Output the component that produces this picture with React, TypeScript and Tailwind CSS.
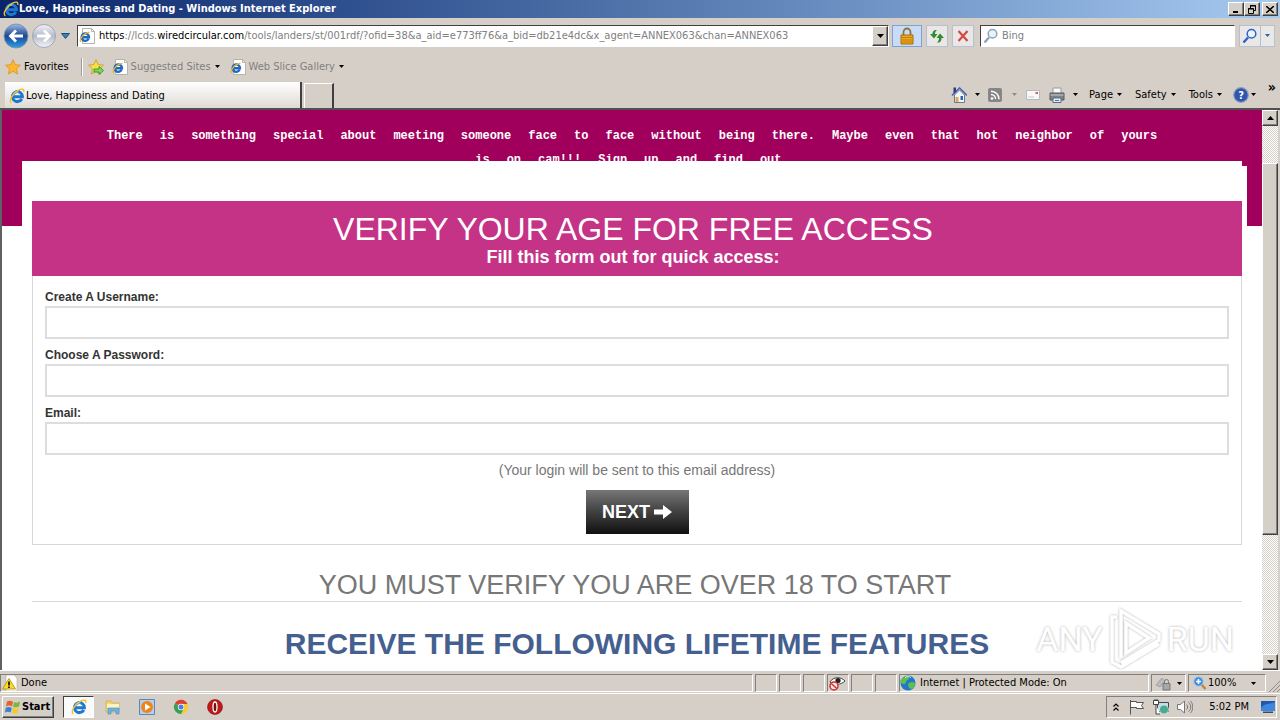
import { ReactNode } from "react";
import clsx from "clsx";

const heroWords =
  "There is something special about meeting someone face to face without being there. Maybe even that hot neighbor of yours is on cam!!! Sign up and find out.".split(" ")

const fields = [
  { id: "username", label: "Create A Username:", type: "text" },
  { id: "password", label: "Choose A Password:", type: "password" },
  { id: "email", label: "Email:", type: "email" },
]

const raised =
  "bg-[#d4d0c8] border border-t-white border-l-white border-r-[#404040] border-b-[#404040] shadow-[inset_-1px_-1px_0_#808080]"
const sunken = "border border-t-[#808080] border-l-[#808080] border-r-white border-b-white"
const field = "border border-t-[#404040] border-l-[#404040] border-r-white border-b-white bg-white"

const Arrow = ({ className = "" }: { className?: string }) => (
  <svg viewBox="0 0 5 3" className={clsx("w-[5px] h-[3px] shrink-0", className)}>
    <path d="M0 0h5L2.5 3z" fill="currentColor" />
  </svg>
)

const IELogo = () => (
  <svg viewBox="0 0 16 16" className="size-4 shrink-0" fill="none">
    <path d="M12.8 11A5 5 0 1 1 13.4 8.8H4.5" stroke="#1f78d0" strokeWidth="3" />
    <path d="M4.1 7.2A4.6 4.6 0 0 1 9.4 4" stroke="#7fd0fa" strokeWidth="1.4" />
    <path d="M2.4 14.8C-1 13 4 5 9.500 2.200 13 .5 15.700.8 14.600 4" stroke="#f2c02c" strokeWidth="1.4" />
  </svg>
)

const PageLogo = () => (
  <svg viewBox="0 0 16 16" className="size-4 shrink-0" fill="none">
    <path d="M3.500.5h9l3 3v12h-12z" fill="#fff" stroke="#b4b4ac" />
    <path d="M12.500.5v3h3" stroke="#b4b4ac" />
    <path d="M9.6 10.8A3.7 3.7 0 1 1 10 9.200H3.500" stroke="#1f68c0" strokeWidth="2.4" />
    <path d="M2 14C-.5 12 4 5.5 10.500 4.200" stroke="#e9b62c" strokeWidth="1.2" />
  </svg>
)

const Star = ({ add }: { add?: boolean }) => (
  <svg viewBox="0 0 16 16" className="size-4 shrink-0">
    <path
      d="M8 .8l2.200 4.900 5.200.5-3.900 3.600 1.100 5.200L8 12.300 3.400 15l1.100-5.200L.6 6.200l5.200-.5z"
      fill={add ? "#f8e04c" : "#fdb62d"}
      stroke={add ? "#c79a10" : "#e09018"}
      strokeWidth=".8"
    />
    {add && <path d="M6 10h5V7.500l4.500 4-4.500 4V13H6z" fill="#7ed957" stroke="#2c8a1c" strokeWidth=".8" />}
  </svg>
)

const Magnifier = ({ color }: { color: string }) => (
  <svg viewBox="0 0 16 16" className="size-4 shrink-0" fill="none">
    <path d="M1.5 14.5L6 9.5" stroke={color} strokeWidth="2.4" />
    <circle cx="9.5" cy="5.8" r="4.3" fill="#e8f3fb" stroke={color} strokeWidth="1.5" />
  </svg>
)

const TitleBar = () => (
  <div className="flex h-[18px] items-center bg-linear-to-r from-[#0a246a] to-[#a6caf0] pl-[3px] pr-0.5 text-white">
    <IELogo />
    <h1 className="flex-1 font-bold">Love, Happiness and Dating - Windows Internet Explorer</h1>
    <div className="flex">
      <button aria-label="Minimize" className={clsx(raised, "h-3.5 w-4 flex items-center justify-center")}>
        <svg viewBox="0 0 10 8" className="w-2.5 h-2"><path d="M2 6h5v2H2z" /></svg>
      </button>
      <button aria-label="Restore" className={clsx(raised, "h-3.5 w-4 flex items-center justify-center")}>
        <svg viewBox="0 0 10 9" className="w-2.5 h-[9px]" fill="none" stroke="#000">
          <path d="M3.5 3V.5h5v5H7M3 1h6M1.5 3.5h5v5h-5zM1 4h6" />
        </svg>
      </button>
      <button aria-label="Close" className={clsx(raised, "ml-0.5 h-3.5 w-4 flex items-center justify-center")}>
        <svg viewBox="0 0 8 7" className="w-2 h-[7px]"><path d="M0 0l8 7M8 0L0 7" stroke="#000" strokeWidth="1.6" /></svg>
      </button>
    </div>
  </div>
)

const ToolButton = ({ label, className, children }: { label: string; className?: string; children: ReactNode }) => (
  <button aria-label={label} className={clsx("h-[22px] flex items-center justify-center border", className)}>
    {children}
  </button>
)

const plain = "border-[#b4c0d4] bg-[#e9e8e6]"

const AddressRow = () => (
  <div className="flex h-[35px] items-center pl-[3px] pr-[5px]">
    <button aria-label="Back">
      <svg viewBox="0 0 26 26" className="size-[26px]">
        <defs>
          <linearGradient id="back" x2="0" y2="1">
            <stop offset="0" stopColor="#9dbbe4" />
            <stop offset=".5" stopColor="#1c4590" />
            <stop offset="1" stopColor="#2ba0ec" />
          </linearGradient>
        </defs>
        <circle cx="13" cy="13" r="12" fill="url(#back)" stroke="#8494b0" />
        <path d="M20 13H8M13 7.5L7.5 13l5.5 5.5" stroke="#fff" strokeWidth="2.8" fill="none" />
      </svg>
    </button>
    <button aria-label="Forward" className="ml-0.5">
      <svg viewBox="0 0 26 26" className="size-[26px]">
        <defs>
          <linearGradient id="fwd" x2="0" y2="1">
            <stop offset="0" stopColor="#f4f4f8" />
            <stop offset=".5" stopColor="#b4bac9" />
            <stop offset="1" stopColor="#f4f6fa" />
          </linearGradient>
        </defs>
        <circle cx="13" cy="13" r="11.5" fill="url(#fwd)" stroke="#9ea6b6" />
        <path d="M6 13h12M13 7.5l5.500 5.500-5.500 5.500" stroke="#fff" strokeWidth="2.8" fill="none" />
      </svg>
    </button>
    <button aria-label="Recent pages" className="ml-1">
      <svg viewBox="0 0 9 6" className="w-[9px] h-1.5"><path d="M.5.5h8l-4 5z" fill="#3f7fb8" stroke="#1d4f80" /></svg>
    </button>
    <div className={clsx(field, "ml-[7px] flex h-[22px] flex-1 items-center gap-1 overflow-hidden pl-px")}>
      <PageLogo />
      <div role="textbox" aria-label="Address" className="flex-1 whitespace-nowrap text-[#808080]">
        <span className="text-black">https</span>://lcds.<span className="text-black">wiredcircular.com</span>
        /tools/landers/st/001rdf/?ofid=38&amp;a_aid=e773ff76&amp;a_bid=db21e4dc&amp;x_agent=ANNEX063&amp;chan=ANNEX063
      </div>
      <button aria-label="Show address history" className={clsx(raised, "h-5 w-4 flex items-center justify-center")}>
        <svg viewBox="0 0 7 4" className="w-[7px] h-1"><path d="M0 0h7L3.5 4z" /></svg>
      </button>
    </div>
    <ToolButton label="Security report" className="ml-[3px] w-[30px] border-[#7da2d8] bg-[#c8dcf8]">
      <svg viewBox="0 0 16 18" className="w-4 h-[18px]">
        <path d="M4.5 8V5a3.500 3.500 0 0 1 7 0v3" fill="none" stroke="#8a7440" strokeWidth="1.8" />
        <path d="M2 8h12v9H2z" fill="#f0a91e" stroke="#a86c08" />
        <path d="M2.5 10.5h11M2.5 13h11M2.5 15h11" stroke="#c47f0c" />
      </svg>
    </ToolButton>
    <ToolButton label="Refresh" className={clsx(plain, "ml-1 w-[22px]")}>
      <svg viewBox="0 0 16 16" className="size-4" fill="#2e8b2e">
        <path d="M8 2C4.500 1.500 3.500 4 3.500 6H1l4 4.500L8.500 6H6c0-1.500.3-2.500 2-4z" />
        <path d="M8 14.500c3.500.5 4.500-2 4.500-4.500H15l-4-4.500L7.500 10H10c0 1.800-.3 3-2 4.500z" />
      </svg>
    </ToolButton>
    <ToolButton label="Stop" className={clsx(plain, "ml-1 w-[22px]")}>
      <svg viewBox="0 0 12 12" className="size-3"><path d="M1.5 1l9 10M10.5 1l-9 10" stroke="#d34a48" strokeWidth="2.2" /></svg>
    </ToolButton>
    <div className={clsx(field, "ml-1.5 flex h-[22px] w-[255px] items-center gap-[3px] pl-0.5")}>
      <Magnifier color="#8fa3b5" />
      <input aria-label="Search" placeholder="Bing" className="min-w-0 flex-1 outline-none placeholder:text-[#808080]" />
    </div>
    <ToolButton label="Search" className={clsx(plain, "ml-1 w-[22px]")}><Magnifier color="#2b63c8" /></ToolButton>
    <ToolButton label="Search options" className={clsx(plain, "w-3.5 border-l-0 text-[#2b5fb0]")}><Arrow /></ToolButton>
  </div>
)

const FavoritesRow = () => (
  <div className="flex h-[27px] items-center pl-[5px]">
    <button className="flex items-center gap-[3px]"><Star />Favorites</button>
    <div className="ml-3 h-[18px] w-0.5 border-l border-[#a09c94] bg-white" />
    <button aria-label="Add to favorites bar" className="ml-[5px]"><Star add /></button>
    <button className="ml-2 flex items-center gap-[3px] text-[#808080]">
      <PageLogo />Suggested Sites<Arrow className="ml-px text-black" />
    </button>
    <button className="ml-2.5 flex items-center gap-[3px] text-[#808080]">
      <PageLogo />Web Slice Gallery<Arrow className="ml-px text-black" />
    </button>
  </div>
)

const HomeIcon = () => (
  <svg viewBox="0 0 16 16" className="size-4">
    <path d="M3.5 8v7.500h10V8l-5-5z" fill="#f3f6fa" stroke="#6c7a90" />
    <path d="M1 8.500L8.500 1 16 8.500" fill="none" stroke="#4b67b0" strokeWidth="1.6" />
    <path d="M2.5.5H5v4l-2.500 2z" fill="#2b3f78" />
    <path d="M4.5 10h3v5h-3z" fill="#e0a850" /><path d="M9.500 9H12v4H9.500z" fill="#2668b8" />
  </svg>
)

const RssIcon = () => (
  <svg viewBox="0 0 14 14" className="size-3.5" fill="none">
    <rect width="14" height="14" rx="2" fill="#868686" />
    <circle cx="4" cy="10.5" r="1.3" fill="#fff" />
    <path d="M3 6.500a4.500 4.500 0 0 1 4.500 4.500M3 3.200a8 8 0 0 1 8 8" stroke="#fff" strokeWidth="1.4" />
  </svg>
)

const MailIcon = () => (
  <svg viewBox="0 0 14 10" className="w-3.5 h-2.5">
    <path d="M.5.5h13v9H.5z" fill="#f8f8f8" stroke="#b8b8c0" /><path d="M9.500 2H12v2H9.500z" fill="#c8606c" />
    <path d="M2 7h6" stroke="#c8c8d0" />
  </svg>
)

const PrinterIcon = () => (
  <svg viewBox="0 0 16 16" className="size-4">
    <path d="M4 1h8v6H4z" fill="#fafafa" stroke="#999" />
    <path d="M1 6h14v7H1z" fill="#7d8289" stroke="#555a60" />
    <path d="M1.5 8h13" stroke="#c8ccd0" /><path d="M4 11h8v4.500H4z" fill="#dff0fa" stroke="#667" />
    <path d="M6 13.5h4" stroke="#2c7fb8" />
  </svg>
)

const HelpIcon = () => (
  <svg viewBox="0 0 16 16" className="size-4">
    <circle cx="8" cy="8" r="7.3" fill="#2f55ae" stroke="#8f9cc0" strokeWidth="1.2" />
    <text x="8" y="12" textAnchor="middle" fontSize="11" fontWeight="700" fill="#fff">?</text>
  </svg>
)

const TabRow = () => (
  <div className="flex h-[30px] items-end border-b-2 border-[#505050] pl-[5px] pr-1">
    <button className="flex h-[26px] w-[297px] items-center gap-px border-r-2 border-[#404040] bg-linear-to-b from-white to-[#dedbd5] pt-0.5 pl-1 text-left">
      <IELogo />Love, Happiness and Dating
    </button>
    <button aria-label="New tab" className="ml-0.5 h-[25px] w-[30px] border border-r-2 border-b-0 border-white border-r-[#404040]" />
    <div className="ml-auto flex h-[27px] items-center">
      <button aria-label="Home" className="flex items-center gap-2"><HomeIcon /><Arrow /></button>
      <button aria-label="Feeds" className="ml-2 flex items-center gap-2.5"><RssIcon /><Arrow className="text-[#908c84]" /></button>
      <button aria-label="Read mail" className="ml-[9px]"><MailIcon /></button>
      <button aria-label="Print" className="ml-[9px] flex items-center gap-2"><PrinterIcon /><Arrow /></button>
      <button className="ml-[11px] flex items-center gap-1">Page<Arrow /></button>
      <button className="ml-[13px] flex items-center gap-1">Safety<Arrow /></button>
      <button className="ml-[13px] flex items-center gap-1">Tools<Arrow /></button>
      <button aria-label="Help" className="ml-[11px] flex items-center gap-0.5"><HelpIcon /><Arrow /></button>
      <button aria-label="More commands" className="ml-3 self-start text-sm leading-3 font-bold">»</button>
    </div>
  </div>
)

const Watermark = () => (
  <div className="pointer-events-none absolute right-7 bottom-0 flex h-[62px] items-center justify-end gap-1 font-[Roboto] text-[34px] text-white [text-shadow:0_0_3px_#b0b0b0]">
    ANY
    <svg viewBox="0 0 56 62" className="w-14 h-[62px] drop-shadow-[0_0_1px_#b0b0b0]" fill="none" stroke="#fff" strokeWidth="3.5">
      <path d="M10 9H5v45l9 5 38-23M14 50V3l38 23v6L14 55M19 15v30l23-15z" />
    </svg>
    RUN
  </div>
)

const LandingPage = () => (
  <main className="relative min-w-0 flex-1 overflow-hidden bg-[linear-gradient(#a0005c_0_116px,#fff_116px)] font-['Liberation_Sans',Arial,sans-serif]">
    <p className="flex h-[51px] flex-wrap content-start justify-center gap-x-[17px] overflow-hidden px-24 pt-3.5 font-['Liberation_Mono',monospace] text-xs leading-6 font-bold text-white">
      {heroWords.map((word, i) => <span key={i}>{word}</span>)}
    </p>
    <div className="mx-5 bg-white pt-10 pl-2.5 shadow-[5px_5px_0_#fff]">
      <header className="h-[75px] bg-[#c53387] pt-2.5 pr-2 text-center text-white">
        <h2 className="text-[32px] leading-9">VERIFY YOUR AGE FOR FREE ACCESS</h2>
        <p className="text-lg leading-5 font-bold">Fill this form out for quick access:</p>
      </header>
      <form className="border border-t-0 border-[#d8d8d8] px-3 pt-3 pb-2.5">
        {fields.map(({ id, label, type }) => (
          <div key={id} className="mb-[7px]">
            <label htmlFor={id} className="block text-xs leading-[18px] font-bold text-[#333]">{label}</label>
            <input id={id} type={type} className="block h-[33px] w-full border-2 border-[#ddd] bg-white px-2 outline-none" />
          </div>
        ))}
        <p className="text-center text-sm leading-4 text-[#777]">(Your login will be sent to this email address)</p>
        <button
          type="button"
          className="mx-auto mt-3 flex h-11 w-[103px] items-center justify-center gap-1 bg-linear-to-b from-[#777] to-[#111] text-lg font-bold text-white"
        >
          NEXT
          <svg viewBox="0 0 18 14" className="w-[18px] h-3.5"><path d="M0 4.5h9V0l9 7-9 7V9.500H0z" fill="#fff" /></svg>
        </button>
      </form>
      <h3 className="border-b border-[#d8d8d8] pt-6 pr-1 text-center text-[27px] leading-8 text-[#777]">
        YOU MUST VERIFY YOU ARE OVER 18 TO START
      </h3>
      <h2 className="pt-6 text-center text-[30px] leading-9 font-bold text-[#45608f]">RECEIVE THE FOLLOWING LIFETIME FEATURES</h2>
    </div>
    <Watermark />
  </main>
)

const ScrollBar = () => (
  <div className="flex w-4 flex-col bg-[repeating-conic-gradient(#fff_0_25%,#d4d0c8_0_50%)] bg-size-[2px_2px]">
    <button aria-label="Scroll up" className={clsx(raised, "h-4 flex items-center justify-center")}>
      <svg viewBox="0 0 7 4" className="w-[7px] h-1"><path d="M0 4h7L3.5 0z" /></svg>
    </button>
    <div className="grow-[37]" />
    <div className={clsx(raised, "grow-[372]")} />
    <div className="grow-[119]" />
    <button aria-label="Scroll down" className={clsx(raised, "h-4 flex items-center justify-center")}>
      <svg viewBox="0 0 7 4" className="w-[7px] h-1"><path d="M0 0h7L3.5 4z" /></svg>
    </button>
  </div>
)

const Cell = ({ className, children }: { className?: string; children?: ReactNode }) => (
  <div className={clsx(sunken, "flex items-center", className)}>{children}</div>
)

const StatusBar = () => (
  <div className="flex h-[23px] gap-0.5 border-t border-white pt-[3px] pb-px">
    <Cell className="flex-1 gap-[3px] pl-px">
      <svg viewBox="0 0 16 16" className="size-4">
        <path d="M4 0h8l3 3v13H4z" fill="#fff" stroke="#aaa" strokeWidth=".6" />
        <path d="M7 3.500L13.500 14H.5z" fill="#f8dc28" stroke="#b08c00" strokeWidth=".8" />
        <path d="M7 6.500v4M7 11.500V13" stroke="#000" strokeWidth="1.6" />
      </svg>
      Done
    </Cell>
    <Cell className="w-[22px]" />
    <Cell className="w-[22px]" />
    <Cell className="w-[22px]" />
    <Cell className="w-[22px]">
      <svg viewBox="0 0 18 16" className="w-[18px] h-4" fill="none">
        <path d="M2 7C5 1.500 13 1.500 17 6c-4 4-11 4.500-15 1z" fill="#fff" stroke="#444" />
        <circle cx="10" cy="5.5" r="2.6" fill="#222" />
        <circle cx="6" cy="11" r="4" fill="#fbe8e8" stroke="#d03030" strokeWidth="1.5" /><path d="M3.300 8.500l5.400 5" stroke="#d03030" strokeWidth="1.5" />
      </svg>
    </Cell>
    <Cell className="w-[22px]" />
    <Cell className="w-[22px]" />
    <Cell className="w-[250px] gap-1">
      <svg viewBox="0 0 16 16" className="size-4">
        <circle cx="8" cy="8" r="7.5" fill="#2277c8" />
        <path d="M3 3c3-3 6-2 6 0S6 5 6 7s-3 3-5 1 0-4 2-5zM9 8c3-2 6-1 6 1s-2 5-4 5-4-4-2-6z" fill="#5cc050" />
        <path d="M5 2.500c2-1.500 5-1 6 0" stroke="#d8f0ff" fill="none" />
      </svg>
      Internet | Protected Mode: On
    </Cell>
    <Cell className="w-[35px] justify-center gap-1.5">
      <svg viewBox="0 0 16 16" className="size-4">
        <path d="M1 10l6-7 3 3-5 6z" fill="#b8bcc0" stroke="#888" strokeWidth=".6" />
        <path d="M8 8.500h7V15H8z" fill="#a8a8a8" stroke="#777" /><path d="M9.500 8V6.500a2 2 0 0 1 4 0V8" fill="none" stroke="#777" />
      </svg>
      <Arrow />
    </Cell>
    <Cell className="w-[78px] gap-px pl-1">
      <svg viewBox="0 0 14 14" className="size-3.5" fill="none">
        <path d="M8 8l4.500 5" stroke="#b88430" strokeWidth="2.2" />
        <circle cx="5.5" cy="5.5" r="4.7" fill="#3e8de0" stroke="#a8c8ec" /><path d="M3 5.500h5M5.500 3v5" stroke="#fff" strokeWidth="1.5" />
      </svg>
      <span className="w-9">100%</span>
      <Arrow className="ml-1.5" />
    </Cell>
    <svg viewBox="0 0 12 12" className="size-3 self-end" stroke="#908c84"><path d="M1 12L12 1M5 12l7-7M9 12l3-3" /></svg>
  </div>
)

const TaskBar = () => (
  <div className="flex h-[27px] items-center border-t border-white pl-0.5 pr-[3px]">
    <button className={clsx(raised, "flex h-[22px] w-[52px] items-center pl-0.5 font-bold")}>
      <svg viewBox="0 0 16 16" className="mr-px size-4 shrink-0">
        <path d="M2 2.500c2-1 4-1 6 .3l-1 4.700c-2-1.200-4-1.200-6 0z" fill="#e8602c" />
        <path d="M9 3c2 1 4 .8 6-.5l-1 5c-2 1-4 1-6 .2z" fill="#7ab83c" />
        <path d="M.8 8.700c2-1 4-1 6 .2l-1.200 4.600c-2-1.200-3.600-1-5.600 0z" fill="#3a7fd0" />
        <path d="M7.800 9c2 1 4 .9 6-.3l-1.200 5c-2 1-4 .9-6 0z" fill="#f8c828" />
      </svg>
      Start
    </button>
    <button aria-label="Internet Explorer" className="ml-[9px] flex h-[22px] w-[31px] items-center justify-center border border-t-[#404040] border-l-[#404040] border-r-white border-b-white bg-[#fafafa]">
      <IELogo />
    </button>
    <button aria-label="Explorer" className="ml-[11px]">
      <svg viewBox="0 0 16 16" className="size-4">
        <path d="M1 2h5l1 2h7v9H1z" fill="#f3d56c" stroke="#c8a440" strokeWidth=".6" />
        <path d="M2 5h12v4H2z" fill="#fdf3c0" /><path d="M3 15V9h11v6h-3v-3H6v3z" fill="#6cb4e4" stroke="#4a8cc0" strokeWidth=".6" />
      </svg>
    </button>
    <button aria-label="Media Player" className="ml-[18px]">
      <svg viewBox="0 0 16 16" className="size-4">
        <path d="M.5.5h15v15H.5z" fill="#b4d0ec" stroke="#5888c0" /><circle cx="8" cy="8" r="6" fill="#f08418" /><path d="M6 4.500v7L11.500 8z" fill="#fff" />
      </svg>
    </button>
    <button aria-label="Chrome" className="ml-[18px]">
      <svg viewBox="0 0 16 16" className="size-4">
        <path d="M8 8L1.900 4.500A7 7 0 0 1 14.500 5z" fill="#dc4030" /><path d="M8 8H6l2.500 7a7 7 0 0 0 6-10H8z" fill="#f8cc30" />
        <path d="M8 8L1.900 4.500A7 7 0 0 0 8 15l2.500-5z" fill="#38a050" /><circle cx="8" cy="8" r="3.2" fill="#fff" /><circle cx="8" cy="8" r="2.5" fill="#4080e8" />
      </svg>
    </button>
    <button aria-label="Opera" className="ml-[18px]">
      <svg viewBox="0 0 16 16" className="size-4">
        <circle cx="8" cy="8" r="7.5" fill="#c01818" stroke="#801010" strokeWidth=".6" /><ellipse cx="8" cy="8" rx="2" ry="5" fill="#701010" stroke="#fff" strokeWidth="1.3" />
      </svg>
    </button>
    <div className={clsx(sunken, "ml-auto flex h-[22px] items-center pl-1.5 pr-px")}>
      <svg viewBox="0 0 6 8" className="w-1.5 h-2" fill="none" stroke="#000" strokeWidth="1.2"><path d="M.5 3.500L3 1l2.500 2.500M.5 7.500L3 5l2.500 2.500" /></svg>
      <svg viewBox="0 0 16 16" className="ml-2.5 size-4" fill="#fff" stroke="#555"><path d="M1.500 1v14.500M1.500 2.500h6v1h7l-2 3 2 3h-7v-1h-6" /></svg>
      <svg viewBox="0 0 16 16" className="ml-2 size-4">
        <path d="M4.500 3.500h11v9h-11z" fill="#c4dce0" stroke="#445" /><circle cx="11" cy="10.5" r="4.5" fill="#48a890" stroke="#e8f4f0" strokeWidth=".7" />
        <path d="M.5 1.500h5v4h-5zM3 5.500V15h4" fill="#fff" stroke="#444" /><path d="M2 0v2M4 0v2" stroke="#444" />
      </svg>
      <svg viewBox="0 0 16 16" className="ml-2 size-4" fill="none" stroke="#777"><path d="M.5 5.500h3L7.500 2v12l-4-3.500h-3z" fill="#fff" /><path d="M9.500 5.500c1.500 1 1.500 4 0 5M11.500 3.500c3 2 3 7 0 9M13.500 2c3 3 3 9 0 12" /></svg>
      <time className="ml-4">5:02 PM</time>
      <svg viewBox="0 0 14 14" className="ml-3 size-3.5"><path d="M0 1h14v10H0z" fill="#2058b0" /><path d="M0 8c4-6 9-3 14-6v9H0z" fill="#3c88e0" /><path d="M2 11.500h10V13H2z" fill="#3a4a60" /></svg>
    </div>
  </div>
)

const App = () => {
  return (
    <div className="flex h-screen flex-col overflow-hidden bg-[#d6cfc7] font-['DejaVu_Sans_Condensed','DejaVu_Sans',sans-serif] text-[11px] leading-3.5 text-black">
      <TitleBar />
      <AddressRow />
      <FavoritesRow />
      <TabRow />
      {/* Page viewport */}
      <div className="flex min-h-0 flex-1 border-l-2 border-[#606060] pr-0.5">
        <LandingPage />
        <ScrollBar />
      </div>
      <StatusBar />
      <TaskBar />
    </div>
  )
}

export default App
